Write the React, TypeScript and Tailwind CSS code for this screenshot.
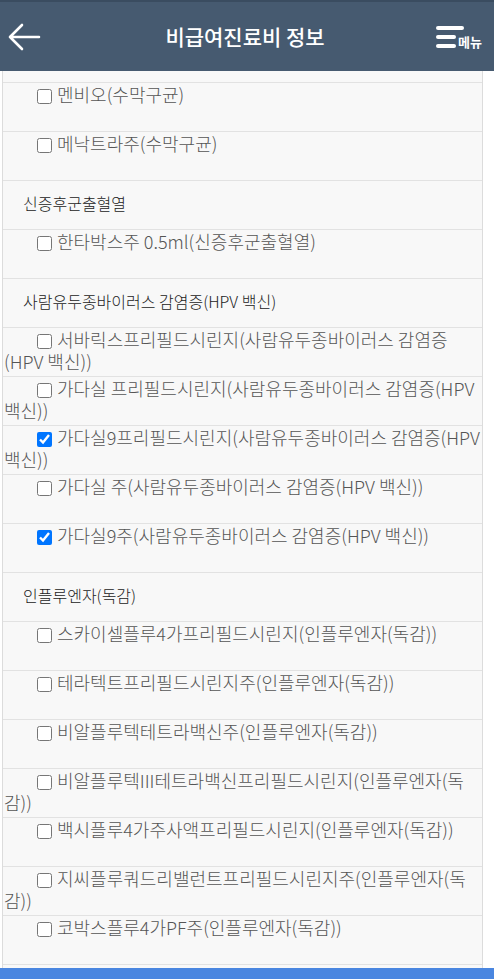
import React from 'react';

type Row =
  | { kind: 'cat'; label: string }
  | { kind: 'item'; label: string; checked?: boolean };

const ROWS: Row[] = [
  { kind: 'item', label: '멘비오(수막구균)' },
  { kind: 'item', label: '메낙트라주(수막구균)' },
  { kind: 'cat', label: '신증후군출혈열' },
  { kind: 'item', label: '한타박스주 0.5ml(신증후군출혈열)' },
  { kind: 'cat', label: '사람유두종바이러스 감염증(HPV 백신)' },
  { kind: 'item', label: '서바릭스프리필드시린지(사람유두종바이러스 감염증(HPV 백신))' },
  { kind: 'item', label: '가다실 프리필드시린지(사람유두종바이러스 감염증(HPV 백신))' },
  { kind: 'item', label: '가다실9프리필드시린지(사람유두종바이러스 감염증(HPV 백신))', checked: true },
  { kind: 'item', label: '가다실 주(사람유두종바이러스 감염증(HPV 백신))' },
  { kind: 'item', label: '가다실9주(사람유두종바이러스 감염증(HPV 백신))', checked: true },
  { kind: 'cat', label: '인플루엔자(독감)' },
  { kind: 'item', label: '스카이셀플루4가프리필드시린지(인플루엔자(독감))' },
  { kind: 'item', label: '테라텍트프리필드시린지주(인플루엔자(독감))' },
  { kind: 'item', label: '비알플루텍테트라백신주(인플루엔자(독감))' },
  { kind: 'item', label: '비알플루텍III테트라백신프리필드시린지(인플루엔자(독감))' },
  { kind: 'item', label: '백시플루4가주사액프리필드시린지(인플루엔자(독감))' },
  { kind: 'item', label: '지씨플루쿼드리밸런트프리필드시린지주(인플루엔자(독감))' },
  { kind: 'item', label: '코박스플루4가PF주(인플루엔자(독감))' },
  { kind: 'item', label: '플루아릭스테트라프리필드시린지(인플루엔자(독감))' },
];

function Header() {
  return (
    <div className="flex h-[71px] items-center justify-between border-t-2 border-[#3a4c60] bg-[#465a70] px-2">
      <svg width="34" height="30" viewBox="0 0 34 30" className="mt-[1px]">
        <path d="M2 15H31M14 3L2 15L14 27" fill="none" stroke="#fff" strokeWidth="2.6" strokeLinecap="round" strokeLinejoin="round" />
      </svg>
      <h1 className="pl-3 text-[21px] font-medium text-white">비급여진료비 정보</h1>
      <div className="flex items-end pr-[4px]">
        <div className="flex flex-col gap-[5px] py-[1px]">
          <span className="block h-[4px] w-[28px] rounded-full bg-white" />
          <span className="block h-[4px] w-[20px] rounded-full bg-white" />
          <span className="block h-[4px] w-[20px] rounded-full bg-white" />
        </div>
        <span className="-ml-[6px] text-[13px] font-bold leading-[15px] text-white">메뉴</span>
      </div>
    </div>
  );
}

export default function App() {
  return (
    <div className="min-h-screen bg-white" style={{ fontFamily: '"Noto Sans CJK KR", "Noto Sans", sans-serif' }}>
      <Header />
      <ul className="ml-[2px] w-[481px] border-x border-[#dcdcdc] bg-[#f8f8f8]">
        <li className="h-[12px] border-b border-[#e2e2e2]" />
        {ROWS.map((row, i) =>
          row.kind === 'cat' ? (
            <li key={i} className="h-[49px] border-b border-[#e2e2e2] pl-[20px] pt-[11px] text-[16px] font-light leading-[22px] text-[#222]">
              {row.label}
            </li>
          ) : (
            <li key={i} className="h-[49px] border-b border-[#e2e2e2] pl-[1px] indent-[29px] text-[18px] font-light leading-[22px] text-[#555]">
              <input
                type="checkbox"
                readOnly
                checked={!!row.checked}
                className="ml-[4px] mr-[5px] size-[15px] appearance-auto align-[-2px]"
              />
              {row.label}
            </li>
          )
        )}
      </ul>
      <div className="fixed bottom-0 left-0 h-[11px] w-full bg-[#4a86e0]" />
    </div>
  );
}
